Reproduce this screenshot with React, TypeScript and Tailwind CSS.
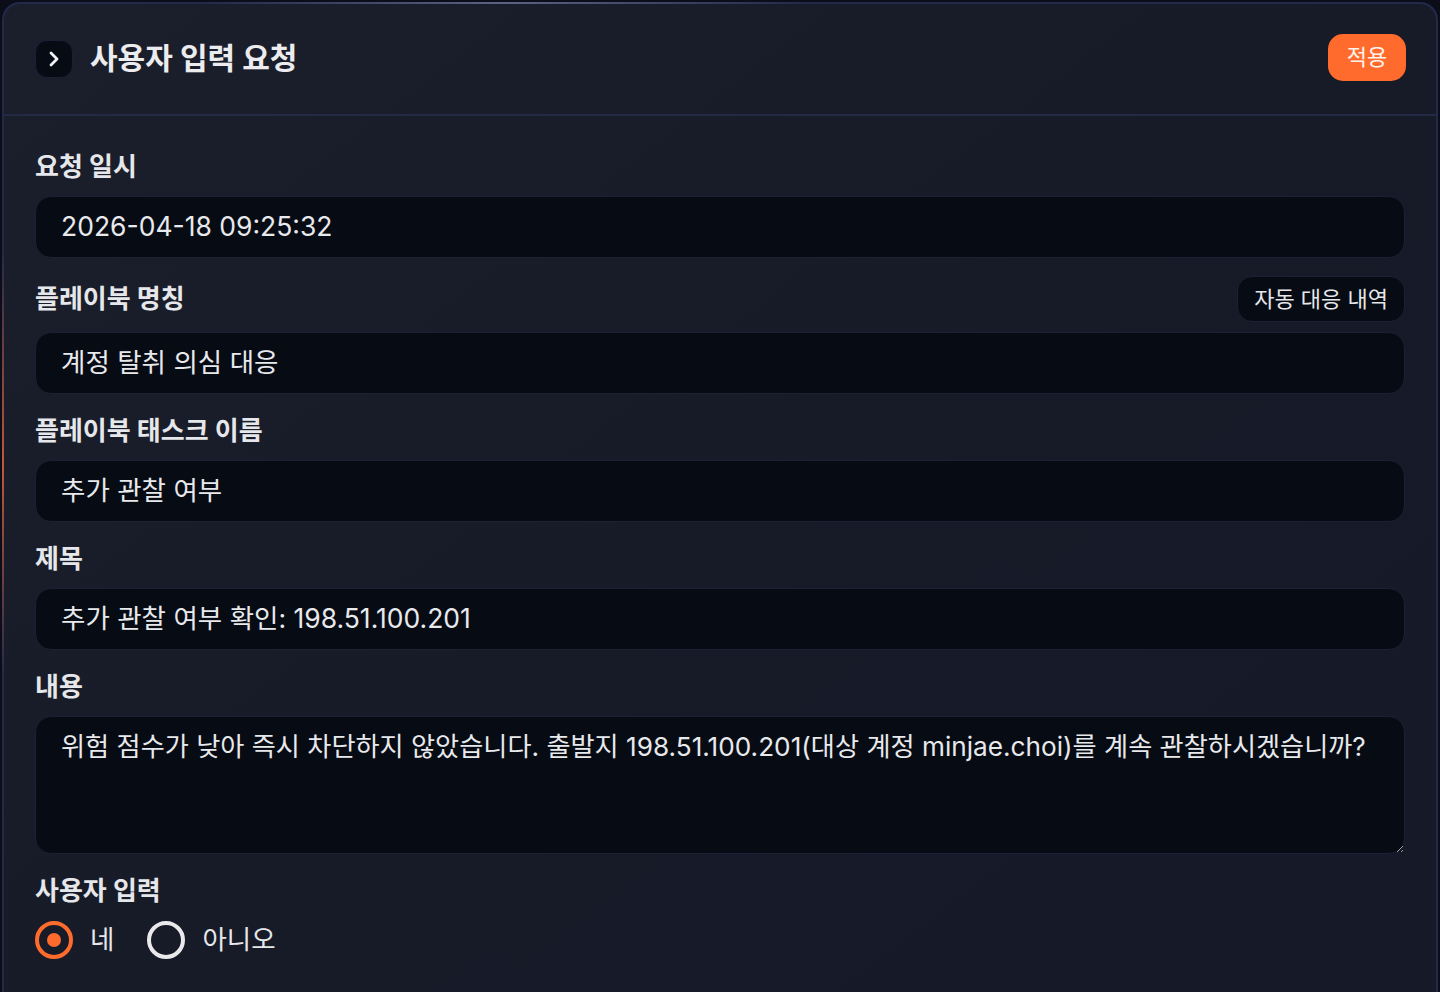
import { ChevronRight } from 'lucide-react'

const font = { fontFamily: '"Inter", "Noto Sans CJK KR", sans-serif' }

function Label({ children }: { children: React.ReactNode }) {
  return <div className="text-[26px] font-bold leading-[32px] text-[#e6e7ea]">{children}</div>
}

function Field({ value }: { value: string }) {
  return (
    <div className="flex h-[62px] items-center rounded-[16px] border border-[#1a2036] bg-[#070b14] px-[25px] text-[26.5px] text-[#e8e9ec]">
      {value}
    </div>
  )
}

function Radio({ checked, label }: { checked: boolean; label: string }) {
  return (
    <label className="flex items-center gap-[17px]">
      {checked ? (
        <span className="flex h-[38px] w-[38px] items-center justify-center rounded-full border-4 border-[#ff6b2c]">
          <span className="h-[14px] w-[14px] rounded-full bg-[#ff6b2c]" />
        </span>
      ) : (
        <span className="h-[38px] w-[38px] rounded-full border-4 border-[#e9e9ec]" />
      )}
      <span className="text-[26.5px] text-[#e6e7ea]">{label}</span>
    </label>
  )
}

export default function App() {
  return (
    <div className="h-[992px] overflow-hidden bg-[#0b0e18] pl-[2px] pr-[2px] pt-[2px]" style={font}>
      <div className="relative h-[1100px] rounded-t-[18px] border-2 border-b-0 border-[#222a4c] bg-gradient-to-br from-[#1b1f2b] via-[#171b28] to-[#151928]">
        {/* top highlight + orange glow on the left edge */}
        <div className="absolute -top-[2px] left-[200px] h-[2px] w-[600px] bg-gradient-to-r from-transparent via-[#5a6384] to-transparent" />
        <div className="absolute -left-[2px] top-[250px] h-[420px] w-[2px] bg-gradient-to-b from-transparent via-[#c05a36] to-transparent" />

        <div className="flex h-[112px] items-center justify-between border-b-2 border-[#232a45] pl-[31px] pr-[30px]">
          <div className="flex items-center gap-[17px]">
            <div className="flex h-[38px] w-[38px] items-center justify-center rounded-[12px] border border-[#1a2036] bg-[#070b14]">
              <ChevronRight className="h-[24px] w-[24px] text-[#f1f1f3]" strokeWidth={2.8} />
            </div>
            <div className="-mt-[2px] text-[30px] font-bold text-[#ececef]">사용자 입력 요청</div>
          </div>
          <button className="-mt-[3px] h-[47px] w-[78px] rounded-[15px] bg-[#ff6b2c] text-[22px] text-[#fff3ec]">적용</button>
        </div>

        <div className="flex flex-col gap-[21px] px-[31px] pt-[35px]">
          <div>
            <div className="mb-[13px]"><Label>요청 일시</Label></div>
            <Field value="2026-04-18 09:25:32" />
          </div>
          <div className="-mt-[3px]">
            <div className="mb-[10px] flex h-[46px] items-center justify-between">
              <Label>플레이북 명칭</Label>
              <button className="h-[46px] rounded-[15px] border border-[#1a2036] bg-[#070b14] px-[16px] text-[22px] text-[#e6e7ea]">자동 대응 내역</button>
            </div>
            <Field value="계정 탈취 의심 대응" />
          </div>
          <div>
            <div className="mb-[13px]"><Label>플레이북 태스크 이름</Label></div>
            <Field value="추가 관찰 여부" />
          </div>
          <div>
            <div className="mb-[13px]"><Label>제목</Label></div>
            <Field value="추가 관찰 여부 확인: 198.51.100.201" />
          </div>
          <div>
            <div className="mb-[13px]"><Label>내용</Label></div>
            <textarea
              readOnly
              className="block h-[138px] w-full resize-y rounded-[16px] border border-[#1a2036] bg-[#070b14] py-[12px] pl-[25px] pr-[8px] text-[26.2px] leading-[36px] text-[#e8e9ec] outline-none"
              style={font}
              value="위험 점수가 낮아 즉시 차단하지 않았습니다. 출발지 198.51.100.201(대상 계정 minjae.choi)를 계속 관찰하시겠습니까?"
            />
          </div>
          <div>
            <div className="mb-[13px]"><Label>사용자 입력</Label></div>
            <div className="flex items-center gap-[33px]">
              <Radio checked label="네" />
              <Radio checked={false} label="아니오" />
            </div>
          </div>
        </div>
      </div>
    </div>
  )
}
